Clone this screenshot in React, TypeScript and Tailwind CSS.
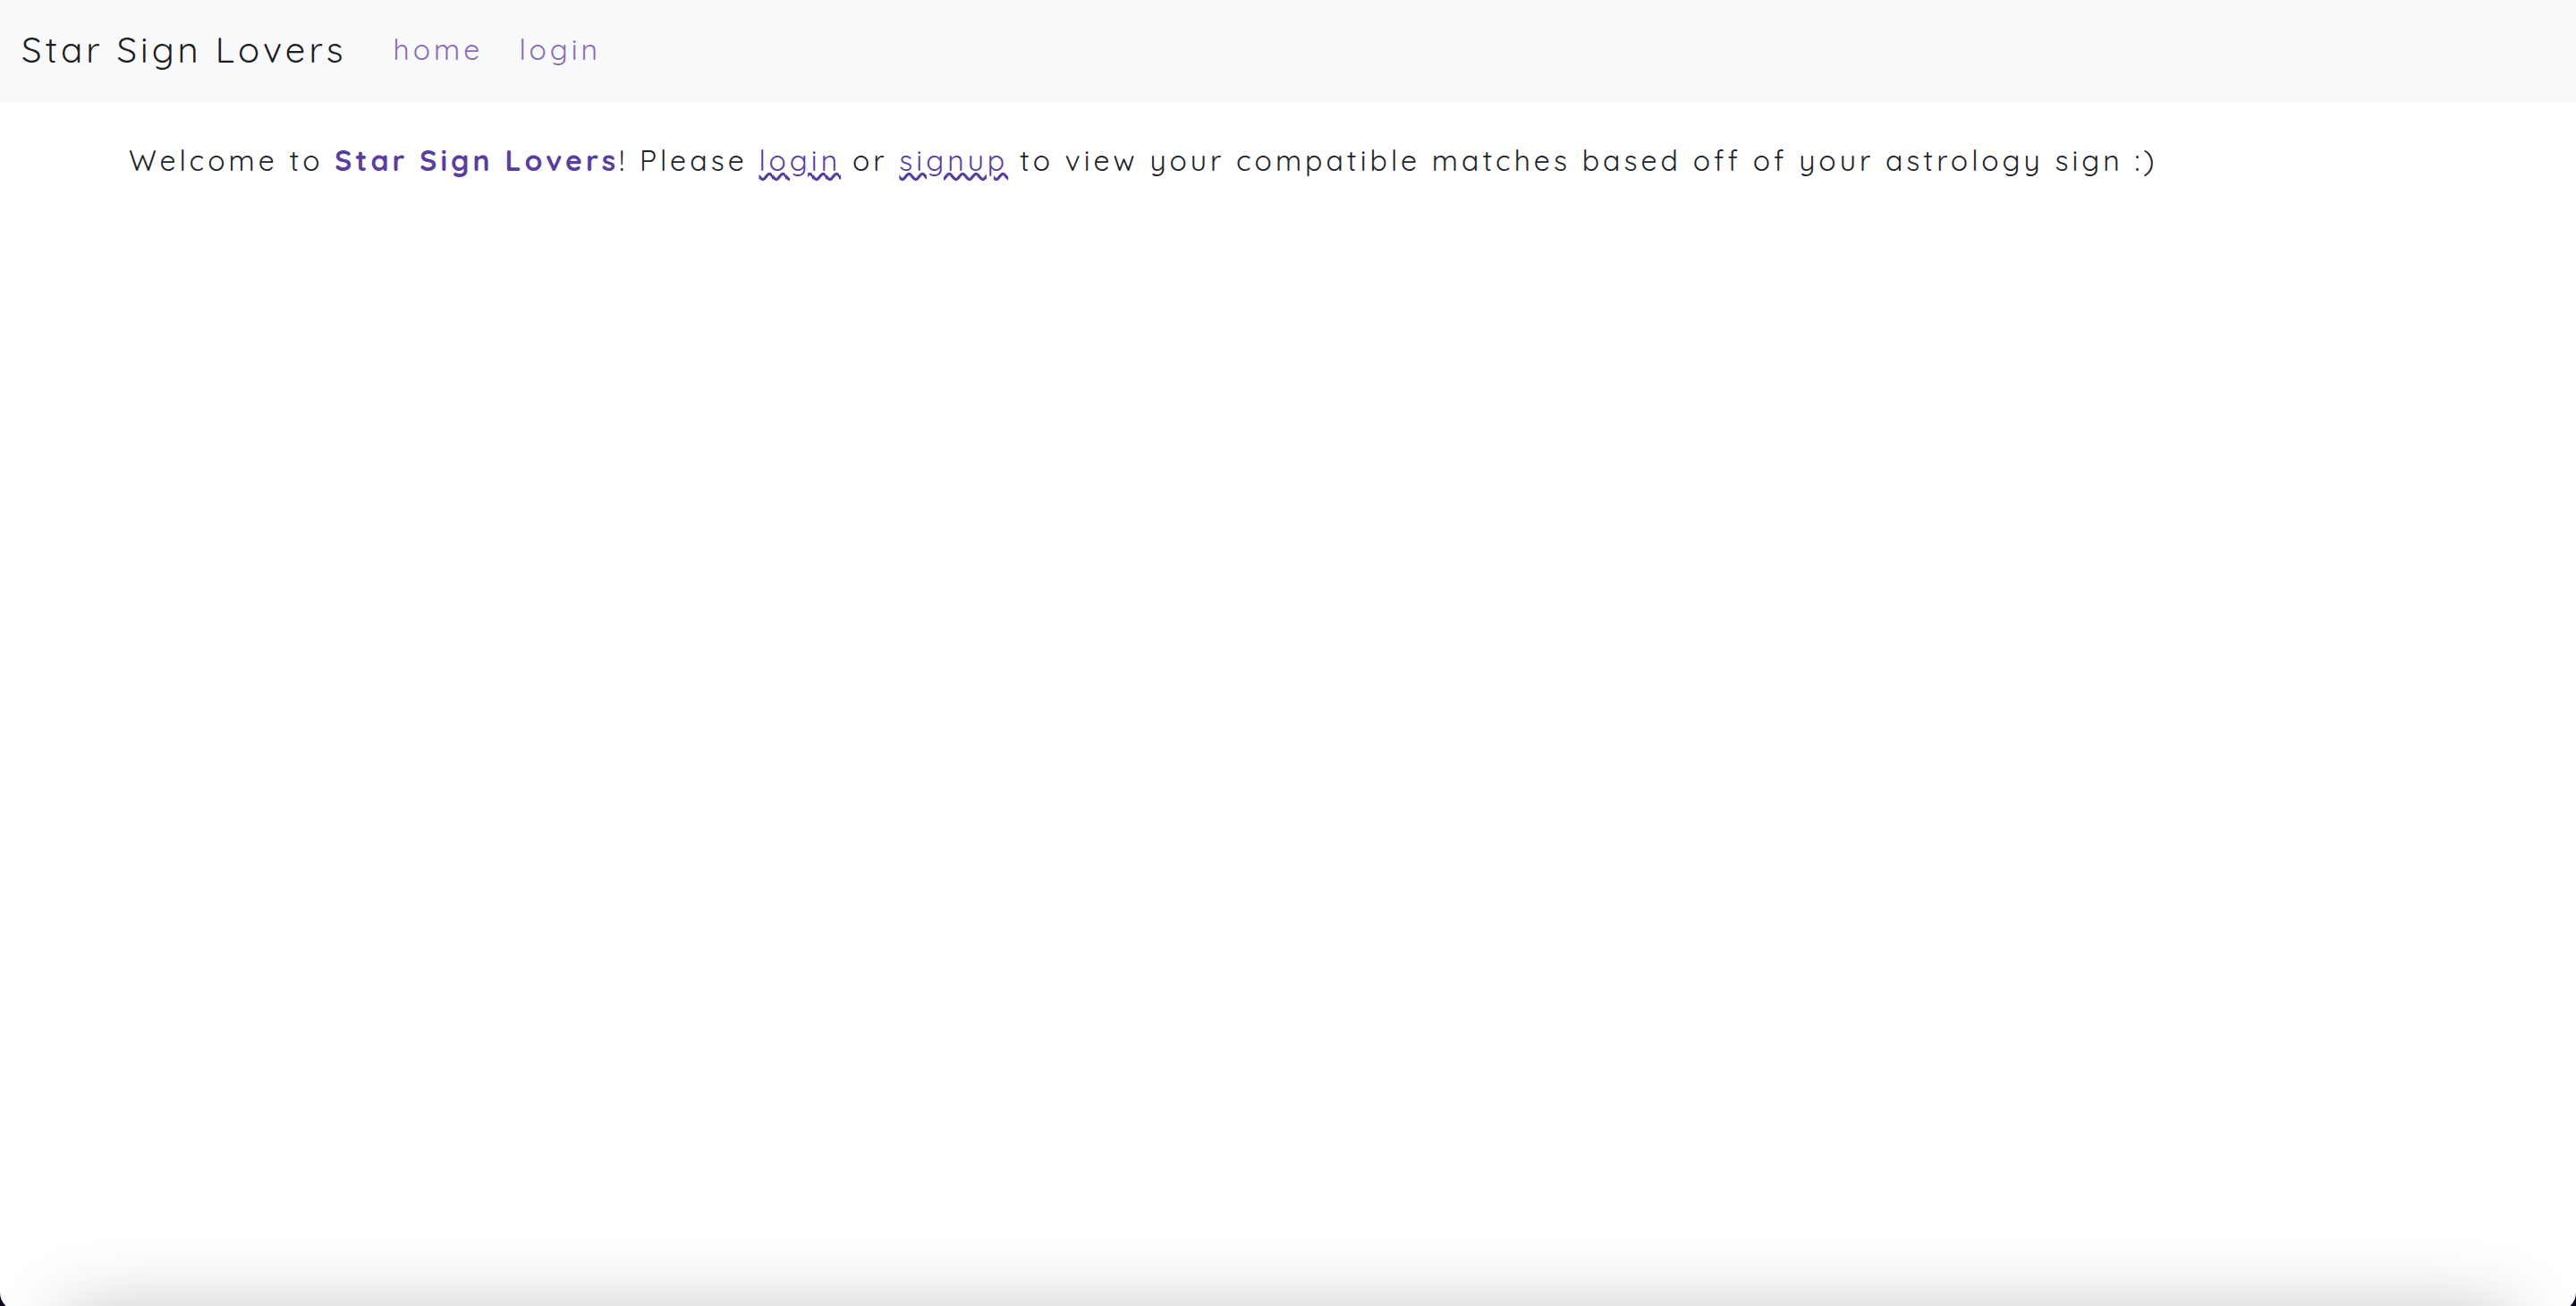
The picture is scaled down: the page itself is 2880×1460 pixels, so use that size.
const linkClass =
  'text-[#593d9f] underline decoration-wavy decoration-[#593d9f] decoration-auto underline-offset-auto'

export default function App() {
  return (
    <div className="flex h-screen flex-col overflow-hidden bg-[#0d0320] font-['Quicksand','Lato',sans-serif] text-[32px] leading-12 tracking-[4px] text-[#212529]">
      <div className="relative -mb-[5px] flex grow flex-col overflow-hidden rounded-b-[20px] bg-white">
        <header className="bg-[#f8f9fa]">
          <nav aria-label="Main" className="flex items-center px-6 pt-[29px] pb-[34px] leading-[52px]">
            <a href="#" className="mr-9 text-[40px] text-black/90">
              Star Sign Lovers
            </a>
            <ul className="flex gap-2 text-[#8c6bb9]">
              <li>
                <a href="#home" className="px-4">home</a>
              </li>
              <li>
                <a href="#login" className="px-4">login</a>
              </li>
            </ul>
          </nav>
        </header>
        <main className="grow px-36 py-10">
          <p>
            Welcome to <strong className="font-bold text-[#593d9f]">Star Sign Lovers</strong>! Please{' '}
            <a href="#login" className={linkClass}>login</a> or{' '}
            <a href="#signup" className={linkClass}>signup</a> to view your compatible matches based
            off of your astrology sign :)
          </p>
        </main>
        <div
          aria-hidden="true"
          className="pointer-events-none absolute inset-x-18 top-full h-20 shadow-[0_0_80px_rgba(0,0,0,0.24)]"
        />
      </div>
    </div>
  )
}
